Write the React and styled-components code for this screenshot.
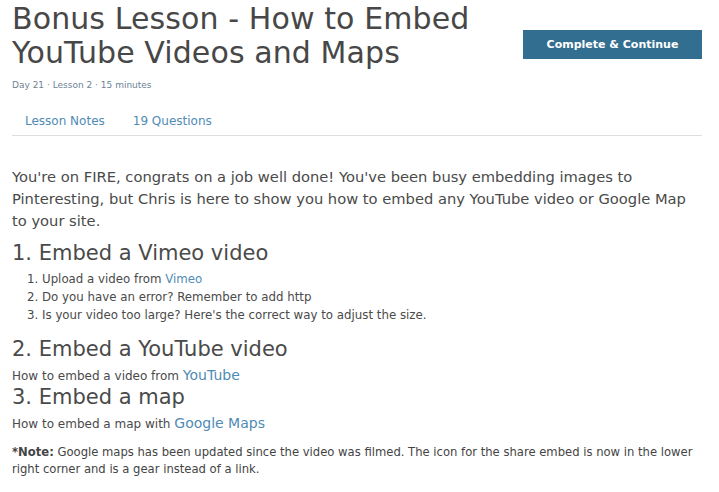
import React from 'react';
import styled, { createGlobalStyle } from 'styled-components';

const GlobalStyle = createGlobalStyle`
  html, body {
    margin: 0;
    padding: 0;
    background: #fff;
  }
  body {
    font-family: "DejaVu Sans", "Liberation Sans", sans-serif;
    color: #4a4a4a;
  }
`;

const Page = styled.main`
  width: 690px;
  padding: 0 17px 0 12px;
`;

const Header = styled.header`
  display: flex;
  justify-content: space-between;
  align-items: flex-start;
`;

const Title = styled.h1`
  margin: 0;
  padding-top: 2px;
  font-size: 30px;
  line-height: 34px;
  letter-spacing: 0.1px;
  font-weight: 400;
  color: #474747;
  max-width: 500px;
`;

const PrimaryButton = styled.button`
  margin-top: 30px;
  width: 179px;
  height: 29px;
  border: none;
  background: #326e8f;
  color: #fff;
  font-family: "DejaVu Sans", sans-serif;
  font-weight: 700;
  font-size: 11px;
`;

const Meta = styled.div`
  margin-top: 9px;
  font-size: 9px;
  line-height: 12px;
  color: #6d8394;
`;

const Tabs = styled.nav`
  display: flex;
  gap: 28px;
  margin-top: 21px;
  padding: 0 13px 5px;
  border-bottom: 1px solid #dedede;
`;

const Tab = styled.a`
  font-size: 12px;
  line-height: 18px;
  color: #4f8bb5;
  text-decoration: none;
`;

const Content = styled.article`
  padding-top: 30px;
`;

const Lead = styled.p`
  margin: 0;
  font-size: 14.7px;
  line-height: 22px;
`;

const Heading = styled.h2`
  margin: ${(p) => p.$top}px 0 0;
  font-size: 21px;
  line-height: 24px;
  font-weight: 400;
`;

const Steps = styled.ol`
  margin: 5px 0 0;
  padding-left: 30px;
  font-size: 11.8px;
  line-height: 18px;
`;

const Small = styled.p`
  margin: 5px 0 0;
  font-size: 12px;
  line-height: 18px;
`;

const Link = styled.a`
  color: #4f8bb5;
  text-decoration: none;
  font-size: ${(p) => (p.$big ? '14px' : 'inherit')};
`;

const Note = styled.p`
  margin: 11px 0 0;
  font-size: 11.6px;
  line-height: 17px;
  color: #444;
`;

export default function App() {
  return (
    <Page>
      <GlobalStyle />
      <Header>
        <Title>Bonus Lesson - How to Embed YouTube Videos and Maps</Title>
        <PrimaryButton>Complete &amp; Continue</PrimaryButton>
      </Header>
      <Meta>Day 21 · Lesson 2 · 15 minutes</Meta>
      <Tabs>
        <Tab href="#">Lesson Notes</Tab>
        <Tab href="#">19 Questions</Tab>
      </Tabs>
      <Content>
        <Lead>
          You're on FIRE, congrats on a job well done! You've been busy embedding images to
          Pinteresting, but Chris is here to show you how to embed any YouTube video or Google Map
          to your site.
        </Lead>
        <Heading $top={9}>1. Embed a Vimeo video</Heading>
        <Steps>
          <li>Upload a video from <Link href="#">Vimeo</Link></li>
          <li>Do you have an error? Remember to add http</li>
          <li>Is your video too large? Here's the correct way to adjust the size.</li>
        </Steps>
        <Heading $top={13}>2. Embed a YouTube video</Heading>
        <Small>How to embed a video from <Link $big href="#">YouTube</Link></Small>
        <Heading $top={0}>3. Embed a map</Heading>
        <Small>How to embed a map with <Link $big href="#">Google Maps</Link></Small>
        <Note>
          <b>*Note:</b> Google maps has been updated since the video was filmed. The icon for the
          share embed is now in the lower right corner and is a gear instead of a link.
        </Note>
      </Content>
    </Page>
  );
}
